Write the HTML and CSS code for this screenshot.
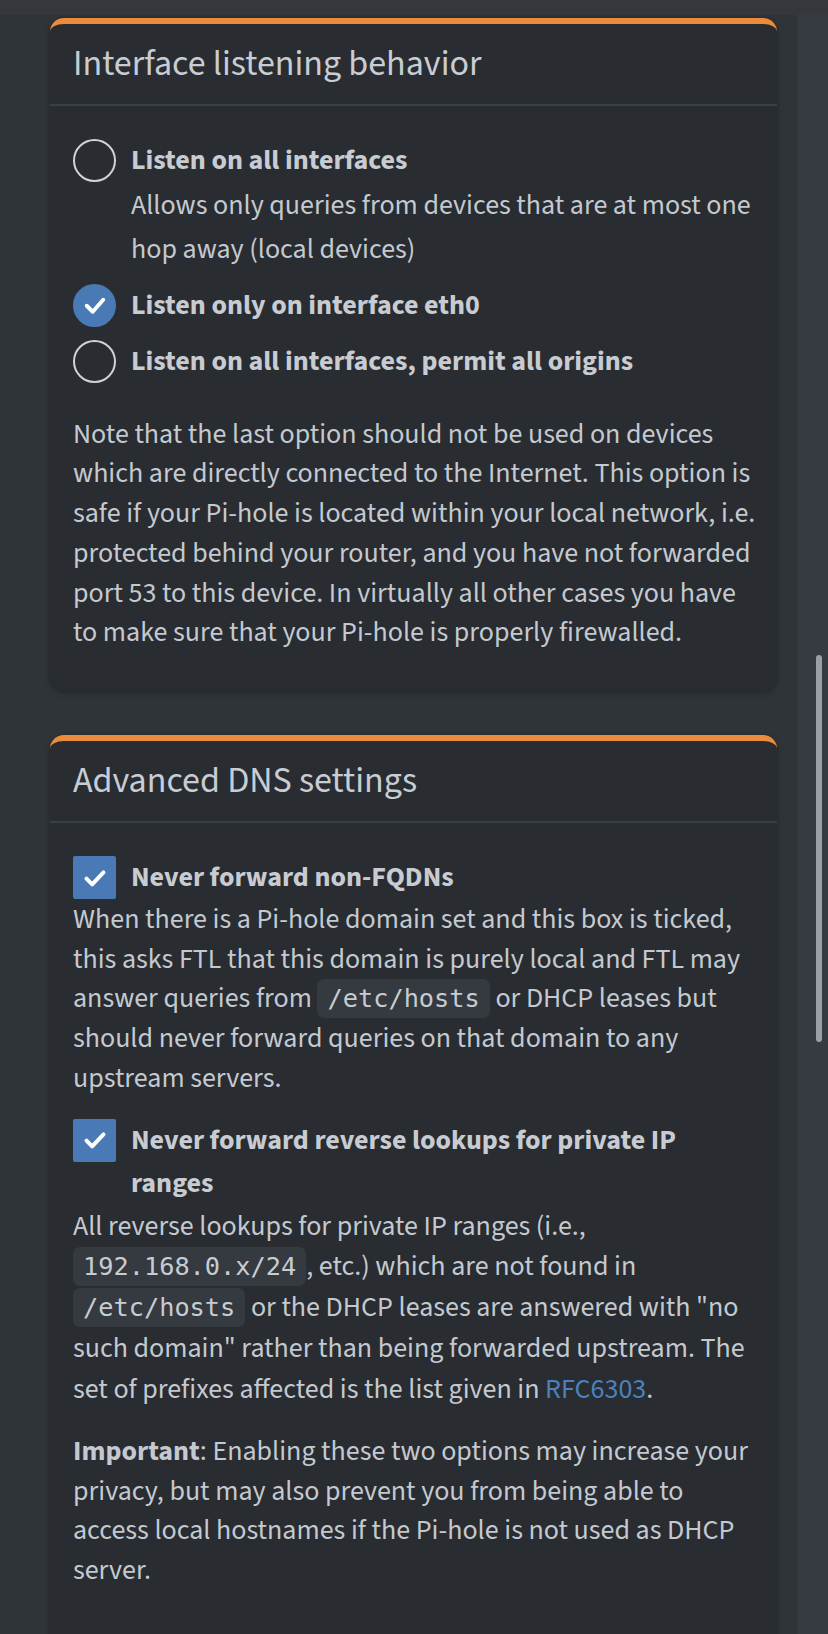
FILE: index.html
```html
<!DOCTYPE html>
<html lang="en">
<head>
<meta charset="utf-8">
<title>Pi-hole DNS settings</title>
<link rel="stylesheet" href="styles.css">
</head>
<body>
<div class="topbar"></div>
<div class="layout">
  <main class="content">
    <section class="card">
      <header class="card-header"><h3 class="card-title">Interface listening behavior</h3></header>
      <div class="card-body">
        <div class="option">
          <span class="radio"></span>
          <div class="option-text">
            <div class="option-label">Listen on all interfaces</div>
            <div class="option-desc">Allows only queries from devices that are at most one<br>hop away (local devices)</div>
          </div>
        </div>
        <div class="option">
          <span class="radio is-checked"><svg viewBox="0 0 24 24"><polyline points="6.5,12.5 10.5,16.5 17.5,8.5"/></svg></span>
          <div class="option-text"><div class="option-label">Listen only on interface eth0</div></div>
        </div>
        <div class="option">
          <span class="radio"></span>
          <div class="option-text"><div class="option-label">Listen on all interfaces, permit all origins</div></div>
        </div>
        <p class="note">Note that the last option should not be used on devices<br>which are directly connected to the Internet. This option is<br>safe if your Pi-hole is located within your local network, i.e.<br>protected behind your router, and you have not forwarded<br>port 53 to this device. In virtually all other cases you have<br>to make sure that your Pi-hole is properly firewalled.</p>
      </div>
    </section>

    <section class="card card-last">
      <header class="card-header"><h3 class="card-title">Advanced DNS settings</h3></header>
      <div class="card-body">
        <div class="check-group">
          <div class="check-row">
            <span class="checkbox"><svg viewBox="0 0 24 24"><polyline points="6,12.5 10,16.5 18,8"/></svg></span>
            <div class="option-label">Never forward non-FQDNs</div>
          </div>
          <p class="desc">When there is a Pi-hole domain set and this box is ticked,<br>this asks FTL that this domain is purely local and FTL may<br>answer queries from <code>/etc/hosts</code> or DHCP leases but<br>should never forward queries on that domain to any<br>upstream servers.</p>
        </div>
        <div class="check-group">
          <div class="check-row">
            <span class="checkbox"><svg viewBox="0 0 24 24"><polyline points="6,12.5 10,16.5 18,8"/></svg></span>
            <div class="option-label">Never forward reverse lookups for private IP<br>ranges</div>
          </div>
          <p class="desc desc-loose">All reverse lookups for private IP ranges (i.e.,<br><code>192.168.0.x/24</code>, etc.) which are not found in<br><code>/etc/hosts</code> or the DHCP leases are answered with "no<br>such domain" rather than being forwarded upstream. The<br>set of prefixes affected is the list given in <a href="#" class="link">RFC6303</a>.</p>
          <p class="desc important"><strong>Important</strong>: Enabling these two options may increase your<br>privacy, but may also prevent you from being able to<br>access local hostnames if the Pi-hole is not used as DHCP<br>server.</p>
        </div>
      </div>
    </section>
  </main>
  <aside class="scroll-track"><div class="scroll-thumb"></div></aside>
</div>
</body>
</html>
```
FILE: styles.css
```css
* { box-sizing: border-box; }
html, body { margin: 0; padding: 0; }
body {
  background: #2f3439;
  color: #c4c9d0;
  font-family: "Source Sans 3", "Source Sans Pro", Lato, sans-serif;
  font-size: 28px;
  line-height: 39.8px;
  height: 1634px;
  overflow: hidden;
}
.topbar { height: 15px; background: #34383d; }
.layout { display: flex; height: 1619px; }
.content { flex: 1; padding: 3px 20px 0 50px; }
.scroll-track { width: 31px; background: #363b41; position: relative; }
.scroll-thumb { position: absolute; left: 19px; top: 640px; width: 6px; height: 387px; border-radius: 3px; background: #9a9fa5; }

.card {
  background: #292c31;
  border-top: 6px solid #ea8c3b;
  border-radius: 14px;
  box-shadow: 0 0 2px rgba(0,0,0,.15), 0 2px 6px rgba(0,0,0,.2);
  margin-bottom: 44px;
}
.card-last { border-bottom-left-radius: 0; border-bottom-right-radius: 0; }
.card-header {
  height: 82px;
  border-bottom: 2px solid #3a3f44;
  padding: 0 23px;
  display: flex;
  align-items: center;
}
.card-title { margin: 0; font-weight: 400; font-size: 36px; line-height: 44px; color: #c8cdd4; }
.card-body { padding: 33px 12px 38px 23px; }

.option { display: flex; gap: 15px; align-items: flex-start; margin-bottom: 13px; }
.radio {
  flex: none; width: 43px; height: 43px; border-radius: 50%;
  border: 2px solid #d2d2d2;
  display: flex; align-items: center; justify-content: center;
}
.radio.is-checked { background: #4a7ab5; border-color: #4a7ab5; }
.radio svg { width: 36px; height: 36px; fill: none; stroke: #fff; stroke-width: 2.6; stroke-linecap: round; stroke-linejoin: round; }
.checkbox svg { width: 34px; height: 34px; fill: none; stroke: #fff; stroke-width: 2.8; stroke-linecap: round; stroke-linejoin: round; }
.option-label { font-weight: 700; line-height: 43.5px; color: #c8ccd2; }
.option-desc { line-height: 44px; }
.note { margin: 31px 0 0; }

.check-group { margin-bottom: 20px; }
.check-row { display: flex; gap: 15px; align-items: flex-start; }
.checkbox {
  flex: none; width: 43px; height: 43px; border-radius: 2px; background: #4a7ab5;
  display: flex; align-items: center; justify-content: center;
}
.desc { margin: 0; }
.desc-loose { line-height: 40.2px; }
.important { margin-top: 23px; }
code {
  font-family: "DejaVu Sans Mono", monospace;
  font-size: 25.3px;
  background: #343a40;
  border-radius: 7px;
  padding: 5px 10px;
  color: #c8ccd2;
}
.link { color: #4a82bd; text-decoration: none; }
```
